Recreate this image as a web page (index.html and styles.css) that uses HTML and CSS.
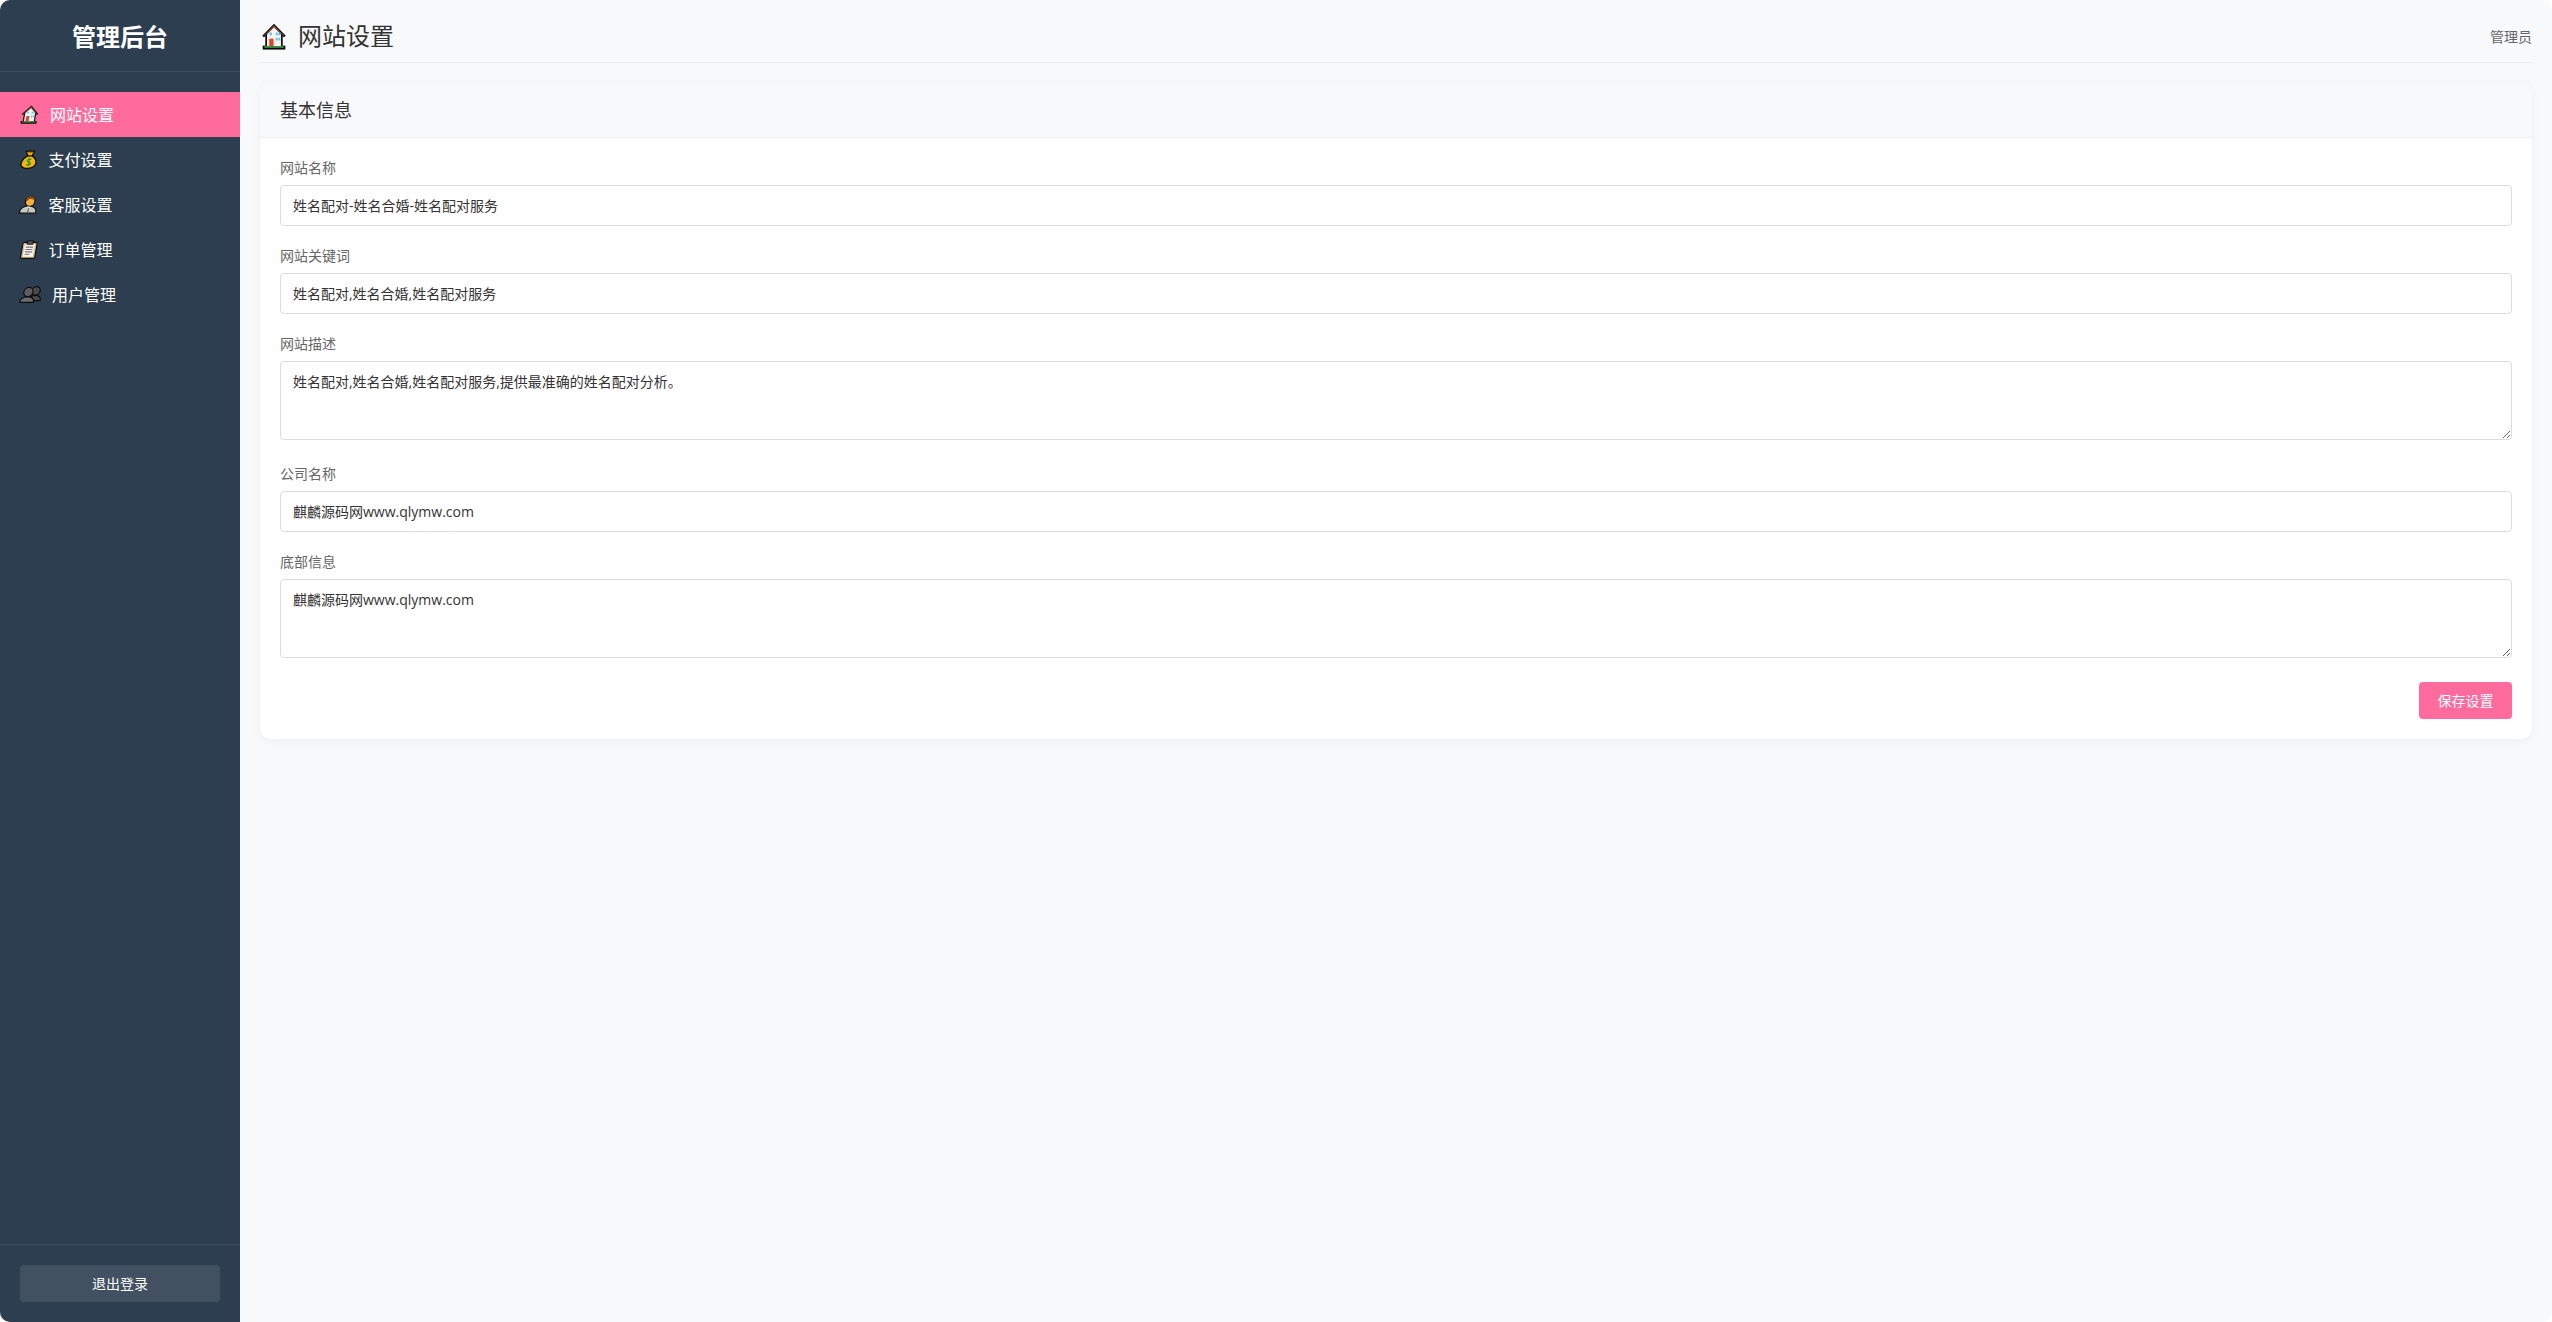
FILE: index.html
```html
<!DOCTYPE html>
<html lang="zh-CN">
<head>
<meta charset="utf-8">
<title>网站设置</title>
<link rel="stylesheet" href="styles.css">
</head>
<body>
<svg class="defs" aria-hidden="true">
  <symbol id="i-house" viewBox="2 1 28 31">
    <rect x="3" y="27" width="26" height="4.500" fill="#0b0b0b"/>
    <rect x="5" y="27.500" width="22" height="2" fill="#3f9b45"/>
    <path d="M16 2 L2.500 15.500 L4.500 17.500 L6 16.200 V27.500 H26 V16.200 L27.500 17.500 L29.500 15.500 Z" fill="#0f0f0f"/>
    <path d="M16 6 L8 14 V27.500 H24 V14 Z" fill="#f7f3ee"/>
    <path d="M16 3.800 L4.500 15.500 L5 16 L16 5.500 L27 16 L27.500 15.500 Z" fill="#b5553c"/>
    <rect x="10.500" y="19" width="5" height="8.500" fill="#e0452a"/>
    <rect x="11" y="12" width="2.500" height="3" fill="#4fc6ee"/>
    <rect x="18" y="12" width="2.200" height="3" fill="#4fc6ee"/>
    <rect x="21" y="12" width="2.200" height="3" fill="#4fc6ee"/>
    <rect x="18" y="18" width="2.200" height="3" fill="#4fc6ee"/>
    <rect x="21" y="18" width="2.200" height="3" fill="#4fc6ee"/>
  </symbol>
  <symbol id="i-bag" viewBox="2 0 28 32">
    <path d="M9 2 L23 2 L20 10 C27 13 30 20 28 25 C26 30 20 31 15 31 C8 31 3 28 4 22 C5 16 9 12 13 10 Z" fill="#f2b705" stroke="#0e0e0e" stroke-width="2.200" stroke-linejoin="round"/>
    <path d="M12 10 H21" stroke="#0e0e0e" stroke-width="2.200"/>
    <path d="M11 4.500 L21 4.500" stroke="#b9790a" stroke-width="2"/>
    <path d="M20 16 C17 14.500 13.500 15.500 13.500 18 C13.500 21 19.500 20 19.500 23 C19.500 25.500 15.500 26 13 24.500 M16.500 13 V27" fill="none" stroke="#2f8f2f" stroke-width="2"/>
  </symbol>
  <symbol id="i-person" viewBox="1 1 30 31">
    <path d="M2 31 C2 22 8 19 16 19 C24 19 30 22 30 31 Z" fill="#c9c9c4" stroke="#0e0e0e" stroke-width="2"/>
    <path d="M13 19.500 L16 26 L19 19.500 Z" fill="#f4f4f0"/>
    <path d="M15.500 22 H16.800 L17.300 30 H15 Z" fill="#5c5c5c"/>
    <circle cx="17" cy="11" r="9" fill="#0e0e0e"/>
    <circle cx="17" cy="11.500" r="7" fill="#f4b23c"/>
    <path d="M10 11 C9 4 14 2.500 18 3 C22 3 25 6 24.500 10 C22 8 18 7.500 15 7.500 C13 9 12 10 11.500 12 Z" fill="#8f4c16"/>
  </symbol>
  <symbol id="i-clip" viewBox="2 0 28 32">
    <rect x="4" y="4" width="24" height="27" rx="2" fill="#d9b88f" stroke="#0e0e0e" stroke-width="2"/>
    <rect x="7.500" y="7.500" width="17" height="20.500" fill="#f5f3ee"/>
    <rect x="11" y="1.500" width="10" height="5.500" fill="#555" stroke="#0e0e0e" stroke-width="1.500"/>
    <path d="M10 12 H22 M10 16 H22 M10 20 H22 M10 24 H18" stroke="#777" stroke-width="2"/>
  </symbol>
  <symbol id="i-users" viewBox="0 2 36 30">
    <circle cx="25" cy="11" r="7" fill="#4a4a4a" stroke="#0e0e0e" stroke-width="2"/>
    <path d="M16 27 C17 20 21 18.500 25 18.500 C31 18.500 35 21 35 27 Z" fill="#4a4a4a" stroke="#0e0e0e" stroke-width="2"/>
    <circle cx="13" cy="13" r="7.500" fill="#5d5d5d" stroke="#0e0e0e" stroke-width="2"/>
    <path d="M1.500 30 C1.500 24 6 21 13 21 C20 21 24.500 24 24.500 30 Z" fill="#6c6c6c" stroke="#0e0e0e" stroke-width="2"/>
  </symbol>
</svg>
<div class="app">
  <aside class="sidebar">
    <div class="sidebar-header">管理后台</div>
    <nav class="menu">
      <a class="menu-item active"><svg class="ico ico-house"><use href="#i-house"/></svg><span>网站设置</span></a>
      <a class="menu-item"><svg class="ico ico-bag"><use href="#i-bag"/></svg><span>支付设置</span></a>
      <a class="menu-item"><svg class="ico ico-person"><use href="#i-person"/></svg><span>客服设置</span></a>
      <a class="menu-item"><svg class="ico ico-clip"><use href="#i-clip"/></svg><span>订单管理</span></a>
      <a class="menu-item"><svg class="ico ico-users"><use href="#i-users"/></svg><span>用户管理</span></a>
    </nav>
    <div class="sidebar-footer"><button class="logout" type="button">退出登录</button></div>
  </aside>
  <main class="main">
    <header class="page-header">
      <h1 class="page-title"><svg class="title-ico"><use href="#i-house"/></svg><span>网站设置</span></h1>
      <div class="user">管理员</div>
    </header>
    <section class="card">
      <h2 class="card-header">基本信息</h2>
      <form class="card-body">
        <div class="group">
          <label class="label">网站名称</label>
          <input class="field" type="text" value="姓名配对-姓名合婚-姓名配对服务">
        </div>
        <div class="group">
          <label class="label">网站关键词</label>
          <input class="field" type="text" value="姓名配对,姓名合婚,姓名配对服务">
        </div>
        <div class="group">
          <label class="label">网站描述</label>
          <textarea class="field area">姓名配对,姓名合婚,姓名配对服务,提供最准确的姓名配对分析。</textarea>
        </div>
        <div class="group">
          <label class="label">公司名称</label>
          <input class="field" type="text" value="麒麟源码网www.qlymw.com">
        </div>
        <div class="group">
          <label class="label">底部信息</label>
          <textarea class="field area">麒麟源码网www.qlymw.com</textarea>
        </div>
        <div class="actions"><button class="save" type="button">保存设置</button></div>
      </form>
    </section>
  </main>
</div>
</body>
</html>
```

FILE: styles.css
```css
* { box-sizing: border-box; }
html, body { margin: 0; height: 100%; background: #fff; }
body {
  font-family: "Open Sans", "Noto Sans CJK SC", sans-serif;
  font-size: 14px;
  line-height: 19px;
  color: #333;
}
.defs { display: none; }
.app {
  display: flex;
  height: 1322px;
  background: #f8f9fa;
  border-radius: 10px;
  overflow: hidden;
}
.sidebar {
  width: 240px;
  flex: none;
  display: flex;
  flex-direction: column;
  background: #2c3e50;
  color: #fff;
}
.sidebar-header {
  height: 72px;
  padding-top: 21px;
  border-bottom: 1px solid #3d4f61;
  text-align: center;
  font-size: 24px;
  font-weight: 700;
  line-height: 32px;
}
.menu { flex: 1; padding-top: 20px; }
.menu-item {
  display: flex;
  align-items: center;
  height: 45px;
  padding: 0 20px;
  font-size: 16px;
  line-height: 22px;
  color: #fff;
}
.menu-item.active { background: #ff6b9d; }
.ico { flex: none; height: 19px; margin-right: 10px; transform: skewX(-10deg); }
.ico-house { width: 20px; }
.ico-bag { width: 18px; margin-right: 10.500px; }
.ico-person { width: 18px; margin-right: 10.500px; }
.ico-clip { width: 18px; margin-right: 10.500px; }
.ico-users { width: 22px; }
.sidebar-footer { padding: 20px; border-top: 1px solid #3d4f61; }
.logout {
  display: block;
  width: 100%;
  height: 37px;
  padding: 0;
  border: 0;
  border-radius: 4px;
  background: rgba(255, 255, 255, .1);
  color: #fff;
  font: inherit;
}
.main { flex: 1; min-width: 0; padding: 20px; }
.page-header {
  display: flex;
  justify-content: space-between;
  align-items: center;
  height: 43px;
  padding-bottom: 10px;
  margin-bottom: 20px;
  border-bottom: 1px solid #eee;
}
.page-title {
  display: flex;
  align-items: center;
  margin: 0;
  font-size: 24px;
  font-weight: 400;
  line-height: 32px;
}
.title-ico { width: 28px; height: 27px; margin-right: 10px; }
.user { color: #666; }
.card {
  background: #fff;
  border-radius: 10px;
  box-shadow: 0 2px 10px rgba(0, 0, 0, .05);
  overflow: hidden;
}
.card-header {
  margin: 0;
  padding: 15px 20px;
  background: #f8f9fa;
  border-bottom: 1px solid #eee;
  font-size: 18px;
  font-weight: 400;
  line-height: 24px;
}
.card-body { padding: 20px; }
.group { margin-bottom: 20px; }
.label {
  display: block;
  margin-bottom: 8px;
  color: #666;
}
.field {
  display: block;
  width: 100%;
  height: 41px;
  padding: 9px 12px 11px;
  border: 1px solid #ddd;
  border-radius: 4px;
  background: #fff;
  color: #333;
  font: inherit;
  outline: none;
}
.area {
  display: inline-block;
  height: 79px;
  padding: 10px 12px;
  vertical-align: baseline;
  resize: vertical;
}
.actions { display: flex; justify-content: flex-end; }
.save {
  width: 93px;
  height: 37px;
  padding: 0;
  border: 0;
  border-radius: 4px;
  background: #ff6b9d;
  color: #fff;
  font: inherit;
}
```
